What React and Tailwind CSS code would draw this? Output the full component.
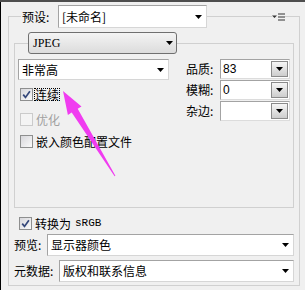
import React from "react";

const line = "border-[#d0d0d0]";

function Arrow({ className = "" }) {
  return (
    <svg width="7" height="4" viewBox="0 0 7 4" className={className}>
      <path d="M0 0h7L3.5 4z" fill="#000" />
    </svg>
  );
}

function Select({ children, className = "" }) {
  return (
    <div className={`flex items-center bg-white border border-[#d6d6d6] border-t-[#a3a3a3] border-l-[#a3a3a3] ${className}`}>
      <span className="flex-1 pl-[3px] whitespace-nowrap">{children}</span>
      <Arrow className="mr-[4px]" />
    </div>
  );
}

function Combo({ value }) {
  return (
    <div className="flex w-[70px] h-[20px] bg-white border border-[#a3a3a3] border-b-[#dcdcdc] border-r-[#dcdcdc]">
      <span className="flex-1 pl-[2px] leading-[18px] [font-family:'Liberation_Sans',sans-serif]">{value}</span>
      <div className="w-[17px] my-px mr-px border border-[#8a8a8a] bg-linear-to-b from-[#f6f6f6] to-[#cdcdcd] flex items-center justify-center">
        <Arrow />
      </div>
    </div>
  );
}

function Check({ checked, disabled }) {
  return (
    <span
      className={`w-[13px] h-[13px] border flex items-center justify-center shrink-0 ${
        disabled ? "border-[#cbcbcb] bg-[#f4f4f4]" : "border-[#8e8f8f] bg-linear-to-br from-[#d8d8dc] to-[#fafafa]"
      }`}
    >
      {checked && (
        <svg width="9" height="9" viewBox="0 0 9 9">
          <path d="M1.2 4.6l2.3 2.8L7.9 1.2" stroke="#34477a" strokeWidth="1.7" fill="none" />
        </svg>
      )}
    </span>
  );
}

function Row({ label, value }) {
  return (
    <div className="flex items-center h-[20px]">
      <span className="w-[34px]">{label}</span>
      <Combo value={value} />
    </div>
  );
}

export default function App() {
  return (
    <div className="relative w-[305px] h-[290px] bg-[#f0f0f0] text-[12px] text-black overflow-hidden [font-family:'Noto_Sans_CJK_SC','Noto_Sans',sans-serif]">
      <div className="h-[2px] bg-[#4e4e4e]" />
      <div className="h-[288px] border-l border-black pl-[7px] pr-[5px] pt-[3px]">
        {/* preset header */}
        <div className="flex h-[23px]">
          <div className={`w-[13px] h-[12px] self-end border-t border-l ${line}`} />
          <span className="ml-px w-[36px] leading-[23px]">预设:</span>
          <Select className="w-[149px] h-[23px]">[未命名]</Select>
          <div className={`flex-1 h-[12px] self-end border-t ${line}`} />
          <svg width="13" height="8" viewBox="0 0 13 8" className="self-center">
            <path d="M0 2.5h5L2.5 5z" fill="#333" />
            <rect x="6" y="0.5" width="7" height="1" fill="#333" />
            <rect x="6" y="3.5" width="7" height="1" fill="#333" />
            <rect x="6" y="6.5" width="7" height="1" fill="#333" />
          </svg>
          <div className={`w-[15px] h-[12px] self-end border-t border-r ${line}`} />
        </div>

        <div className={`h-[258px] border-l border-r border-b ${line} px-[5px] pt-[4px]`}>
          {/* JPEG group */}
          <div className="flex h-[22px]">
            <div className={`w-[14px] h-[11px] self-end border-t border-l ${line}`} />
            <div className="w-[149px] h-[22px] flex items-center rounded-[3px] border border-[#707070] bg-linear-to-b from-[#f4f4f4] to-[#dcdcdc]">
              <span className="flex-1 pl-[4px] [font-family:'Liberation_Serif',serif] text-[12px]">JPEG</span>
              <Arrow className="mr-[3px]" />
            </div>
            <div className={`flex-1 h-[11px] self-end border-t border-r ${line}`} />
          </div>
          <div className={`h-[154px] border-l border-r border-b ${line} px-[3px] pt-[5px] flex`}>
            <div className="w-[151px] flex flex-col">
              <Select className="h-[21px]">非常高</Select>
              <label className="mt-[8px] h-[13px] pl-[2px] flex items-center">
                <Check checked />
                <span className="ml-[1px] px-[1px] leading-[13px] outline-1 outline-dotted outline-black -outline-offset-1">连续</span>
              </label>
              <label className="mt-[12px] h-[13px] pl-[2px] flex items-center text-[#a0a0a0]">
                <Check disabled />
                <span className="ml-[3px]">优化</span>
              </label>
              <label className="mt-[9px] h-[13px] pl-[2px] flex items-center">
                <Check />
                <span className="ml-[3px]">嵌入颜色配置文件</span>
              </label>
            </div>
            <div className="ml-auto flex flex-col gap-px">
              <Row label="品质:" value="83" />
              <Row label="模糊:" value="0" />
              <Row label="杂边:" value="" />
            </div>
          </div>

          <label className="mt-[9px] h-[13px] pl-[5px] flex items-center">
            <Check checked />
            <span className="ml-[3px]">转换为</span>
            <span className="ml-[4px] [font-family:'Liberation_Mono',monospace] text-[11px]">sRGB</span>
          </label>
          <div className="mt-[4px] flex items-center">
            <span className="w-[33px]">预览:</span>
            <Select className="flex-1 h-[22px]">显示器颜色</Select>
          </div>
          <div className="mt-[4px] flex items-center">
            <span className="w-[45px]">元数据:</span>
            <Select className="flex-1 h-[22px]">版权和联系信息</Select>
          </div>
        </div>
      </div>

      {/* annotation arrow */}
      <svg className="absolute inset-0 pointer-events-none" width="305" height="290" viewBox="0 0 305 290">
        <polygon
          points="63,91 81.5,106.4 77.7,108.7 115.4,175.7 114.6,176.3 71.7,112.5 67.9,114.9"
          fill="#f03cf0"
        />
      </svg>
    </div>
  );
}
